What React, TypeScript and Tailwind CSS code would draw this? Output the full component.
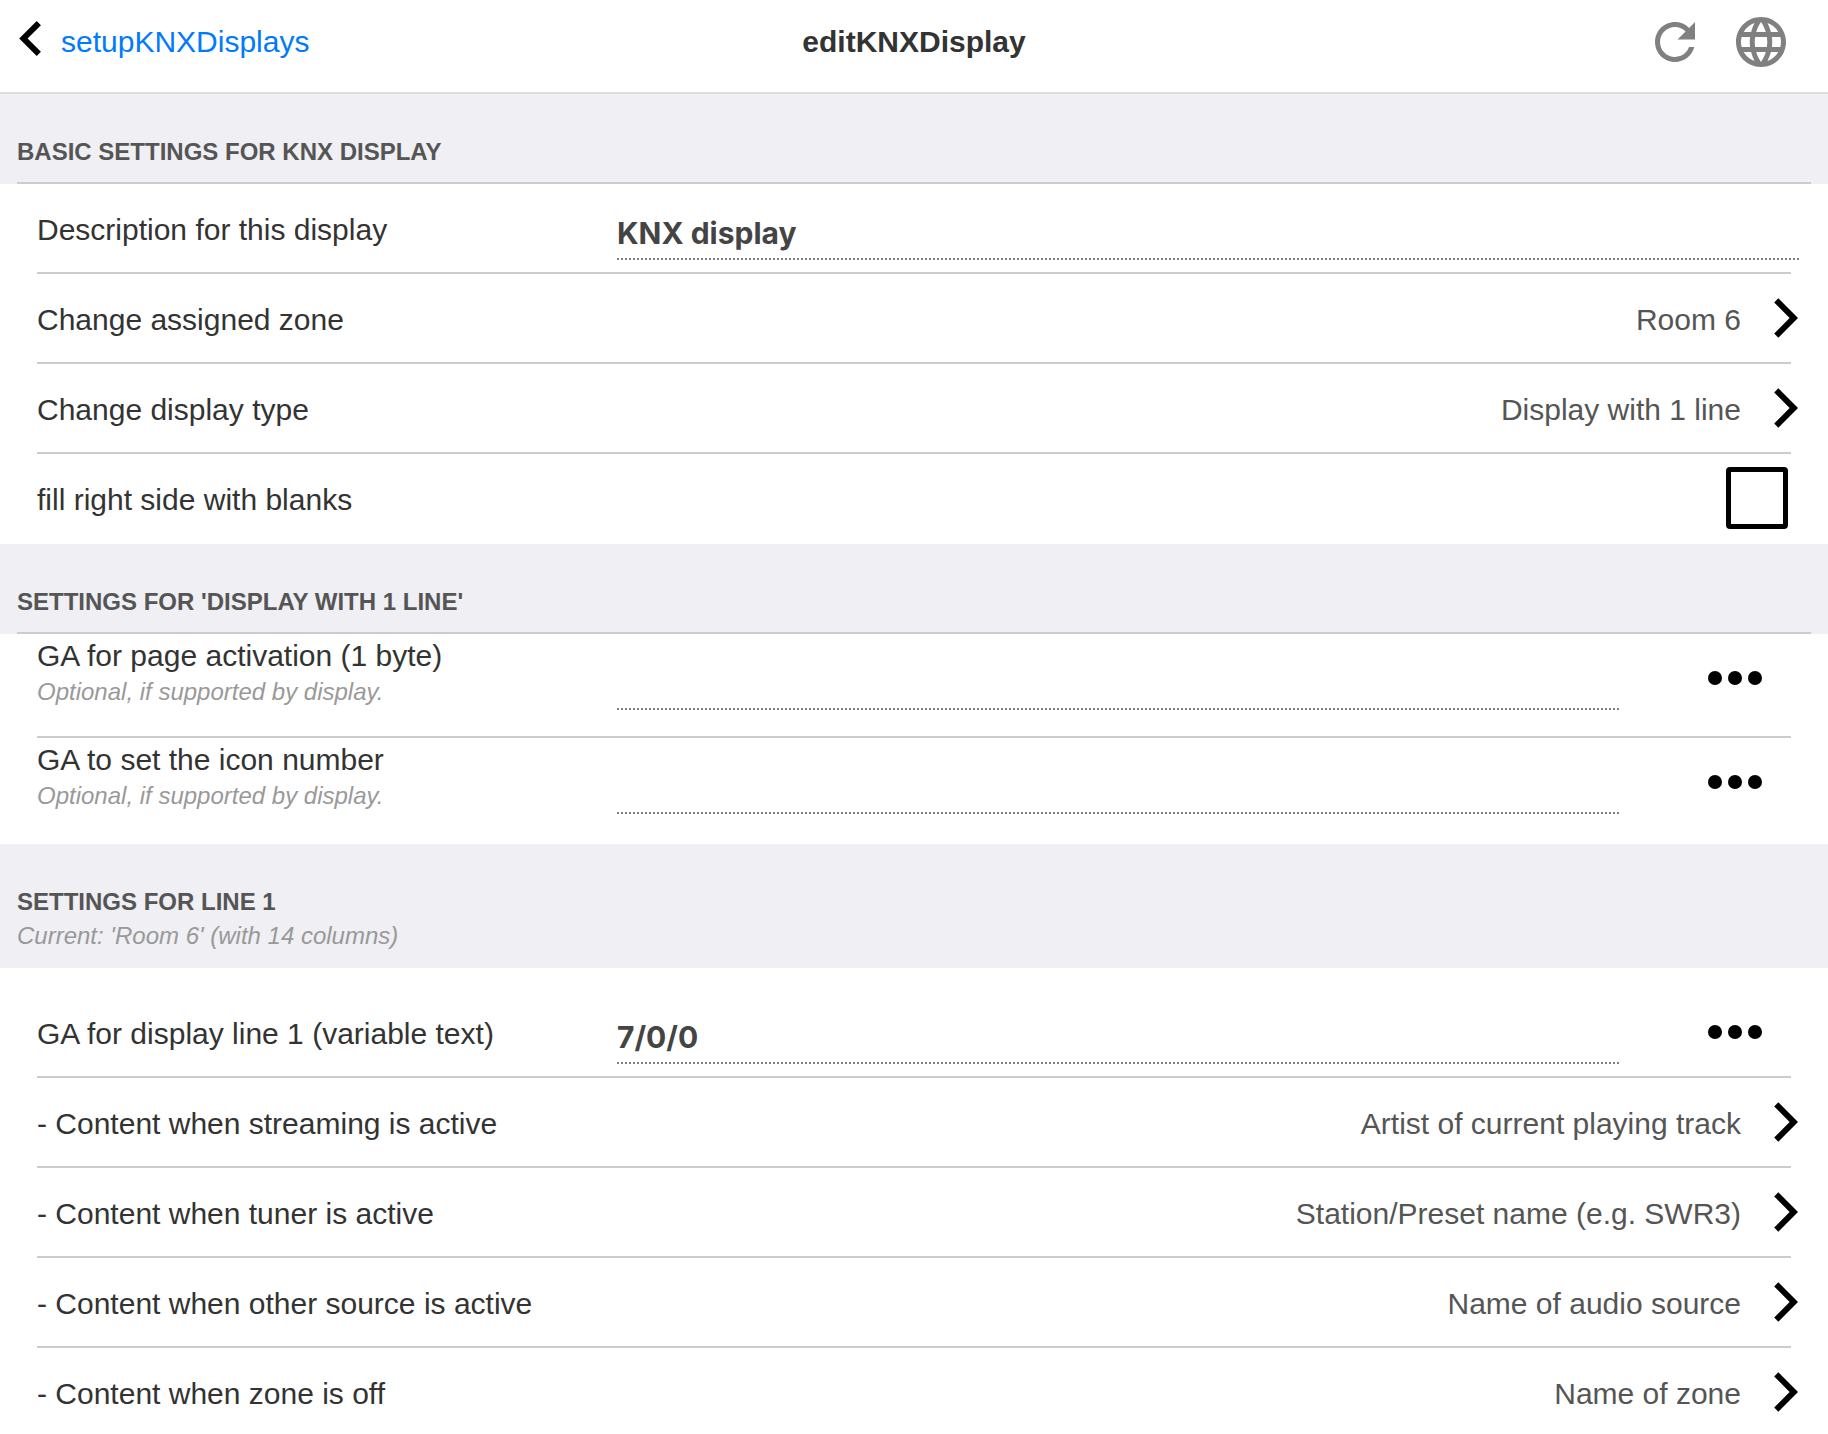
import { useState, type ReactNode } from "react";
import { MdLanguage, MdRefresh } from "react-icons/md";

function SectionHeader({ title, note }: { title: string; note?: string }) {
  return (
    <div className="bg-[#efeff4] px-[17px]">
      <div className={note ? "pt-10 pb-4" : "border-b-2 border-[#cccccc] pt-10 pb-3"}>
        <h2 className="text-2xl leading-9 font-bold text-[#555555] uppercase">{title}</h2>
        {note && <p className="text-2xl leading-8 text-[#999999] italic">{note}</p>}
      </div>
    </div>
  );
}

function Row({ children, last }: { children: ReactNode; last?: boolean }) {
  return (
    <li className={last ? "mx-[37px]" : "mx-[37px] border-b-2 border-[#cccccc]"}>
      <div className="-mr-2">{children}</div>
    </li>
  );
}

function NavRow({ label, value, last }: { label: string; value: string; last?: boolean }) {
  return (
    <Row last={last}>
      <button type="button" className="flex h-[88px] w-full items-center text-left">
        <span className="flex-1 pt-1">{label}</span>
        <span className="pt-1 pr-8 text-[#555555]">{value}</span>
        <svg viewBox="0 0 26 40" className="h-10 w-[26px]" aria-hidden="true">
          <path d="M5.3 0.3 25 20 5.3 39.7 1.2 35.6 16.6 20 1.2 4.4Z" fill="#000" />
        </svg>
      </button>
    </Row>
  );
}

function InputRow({
  id,
  label,
  note,
  initial = "",
  more,
  last,
}: {
  id: string;
  label: string;
  note?: string;
  initial?: string;
  more?: boolean;
  last?: boolean;
}) {
  const [value, setValue] = useState(initial);
  return (
    <Row last={last}>
      <div className={note ? (last ? "flex h-[106px] items-start" : "flex h-[102px] items-start") : "flex h-[88px] items-start"}>
        <label htmlFor={id} className="w-[580px] shrink-0">
          {note ? (
            <span className="block pt-1">
              <span className="block leading-9">{label}</span>
              <span className="block text-2xl leading-9 text-[#999999] italic">{note}</span>
            </span>
          ) : (
            <span className="flex h-[88px] items-center pt-1">{label}</span>
          )}
        </label>
        <input
          id={id}
          type="text"
          value={value}
          onChange={(e) => setValue(e.target.value)}
          className="h-[76px] min-w-0 flex-1 border-b-2 border-dotted border-[#808080] bg-transparent pt-6 font-['Inter',sans-serif] font-bold text-[#444444] outline-none"
        />
        {more && (
          <button type="button" aria-label={`More options for ${label}`} className="flex h-[88px] w-[180px] items-center justify-end pr-[37px]">
            <svg viewBox="0 0 54 14" className="h-3.5 w-[54px]" aria-hidden="true">
              <circle cx="7" cy="7" r="7" />
              <circle cx="27" cy="7" r="7" />
              <circle cx="47" cy="7" r="7" />
            </svg>
          </button>
        )}
      </div>
    </Row>
  );
}

export default function App() {
  const [fill, setFill] = useState(false);
  return (
    <div className="min-h-screen bg-white font-['Liberation_Sans',Arial,sans-serif] text-3xl text-[#333333]">
      <header className="grid h-[94px] grid-cols-[1fr_auto_1fr] items-center border-b-2 border-[#dddddd] px-[37px] pb-2">
        <a href="#setupKNXDisplays" className="-ml-[18px] flex items-center gap-5 text-[#007aff]">
          <svg viewBox="0 0 22 42" className="h-[42px] w-[22px]" aria-hidden="true">
            <path d="M17.7 0 0.2 17.5 17.7 35 21.9 30.8 8.6 17.5 21.9 4.2Z" fill="#000" />
          </svg>
          <span>setupKNXDisplays</span>
        </a>
        <h1 className="font-bold">editKNXDisplay</h1>
        <div className="flex justify-end gap-[26px] text-[#808080]">
          <button type="button" aria-label="Reload">
            <MdRefresh className="size-[60px]" />
          </button>
          <button type="button" aria-label="Language">
            <MdLanguage className="size-[60px]" />
          </button>
        </div>
      </header>
      <main>
        <SectionHeader title="Basic settings for KNX display" />
        <ul>
          <InputRow id="description" label="Description for this display" initial="KNX display" />
          <NavRow label="Change assigned zone" value="Room 6" />
          <NavRow label="Change display type" value="Display with 1 line" />
          <Row last>
            <label htmlFor="fill" className="flex h-[90px] items-center justify-between pr-[11px] pb-0.5">
              <span className="pt-1">fill right side with blanks</span>
              <input
                id="fill"
                type="checkbox"
                checked={fill}
                onChange={(e) => setFill(e.target.checked)}
                className="size-[62px] appearance-none rounded-[4px] border-[5px] border-black checked:bg-black"
              />
            </label>
          </Row>
        </ul>
        <SectionHeader title="Settings for 'Display with 1 line'" />
        <ul>
          <InputRow id="activation" label="GA for page activation (1 byte)" note="Optional, if supported by display." more />
          <InputRow id="icon-number" label="GA to set the icon number" note="Optional, if supported by display." more last />
        </ul>
        <SectionHeader title="Settings for line 1" note="Current: 'Room 6' (with 14 columns)" />
        <ul className="pt-5">
          <InputRow id="line-1" label="GA for display line 1 (variable text)" initial="7/0/0" more />
          <NavRow label="- Content when streaming is active" value="Artist of current playing track" />
          <NavRow label="- Content when tuner is active" value="Station/Preset name (e.g. SWR3)" />
          <NavRow label="- Content when other source is active" value="Name of audio source" />
          <NavRow label="- Content when zone is off" value="Name of zone" last />
        </ul>
      </main>
    </div>
  );
}
